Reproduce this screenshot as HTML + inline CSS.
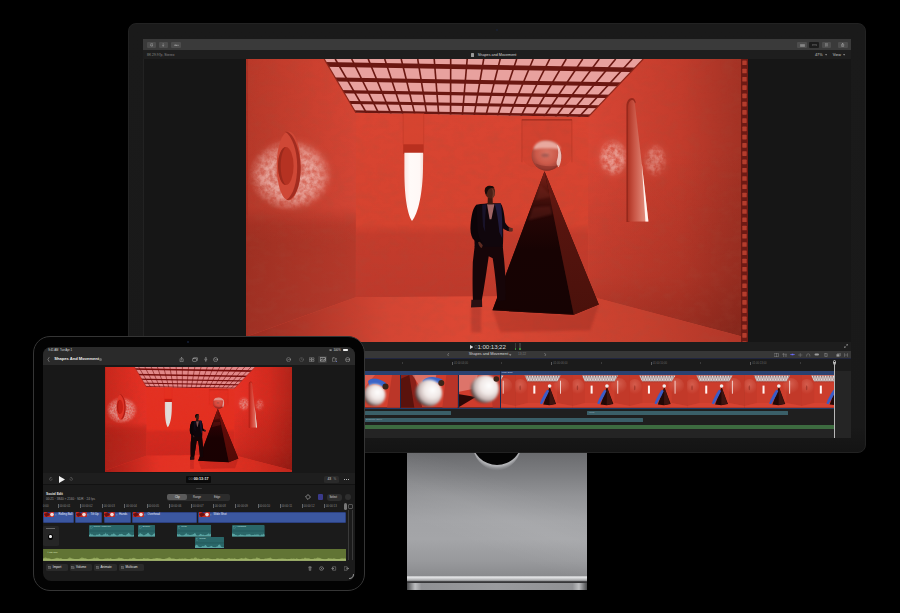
<!DOCTYPE html><html><head><meta charset="utf-8"><style>
html,body{margin:0;padding:0;background:#000;width:900px;height:613px;overflow:hidden;font-family:"Liberation Sans", sans-serif;}
div{box-sizing:border-box;}
svg{position:absolute;display:block;}
</style></head><body>
<svg width="0" height="0" style="position:absolute"><defs><symbol id="scene" viewBox="245.8 58.7 495.6 283" preserveAspectRatio="none">
<defs>
<linearGradient id="gLeft" x1="0" y1="0" x2="0" y2="1"><stop offset="0" stop-color="#d84533"/><stop offset="0.53" stop-color="#d24534"/><stop offset="0.6" stop-color="#bb3a2b"/><stop offset="0.66" stop-color="#b5392a"/><stop offset="1" stop-color="#b5392c"/></linearGradient><linearGradient id="gLeftShade" x1="0" y1="0" x2="1" y2="0"><stop offset="0" stop-color="#5a140a" stop-opacity="0.25"/><stop offset="1" stop-color="#5a140a" stop-opacity="0"/></linearGradient>
<linearGradient id="gBack" x1="0" y1="0" x2="0" y2="1"><stop offset="0" stop-color="#d94532"/><stop offset="0.6" stop-color="#d5432f"/><stop offset="0.66" stop-color="#c43c2c"/><stop offset="1" stop-color="#bd392b"/></linearGradient>
<linearGradient id="gRight" x1="0" y1="0" x2="1" y2="0"><stop offset="0" stop-color="#da4634"/><stop offset="0.1" stop-color="#d54433"/><stop offset="0.6" stop-color="#c23c2c"/><stop offset="0.93" stop-color="#a83426"/><stop offset="1" stop-color="#a43224"/></linearGradient><linearGradient id="gRightShade" x1="0" y1="0" x2="0" y2="1"><stop offset="0.33" stop-color="#4a0e08" stop-opacity="0"/><stop offset="0.58" stop-color="#4a0e08" stop-opacity="0.1"/><stop offset="0.78" stop-color="#4a0e08" stop-opacity="0.17"/><stop offset="0.87" stop-color="#4a0e08" stop-opacity="0.25"/><stop offset="1" stop-color="#4a0e08" stop-opacity="0.35"/></linearGradient>
<linearGradient id="gFloor" x1="0" y1="0" x2="1" y2="0"><stop offset="0" stop-color="#982b20"/><stop offset="0.12" stop-color="#b03628"/><stop offset="0.28" stop-color="#d34533"/><stop offset="0.45" stop-color="#dd4834"/><stop offset="0.8" stop-color="#c6402e"/><stop offset="1" stop-color="#b03628"/></linearGradient>
<radialGradient id="gSphere" cx="0.5" cy="0.42" r="0.58"><stop offset="0" stop-color="#d87464"/><stop offset="0.6" stop-color="#cc5a4a"/><stop offset="0.88" stop-color="#a8463a"/><stop offset="1" stop-color="#7a2c24"/></radialGradient>
<linearGradient id="gPyrL" x1="0" y1="0" x2="0" y2="1"><stop offset="0" stop-color="#7a2018"/><stop offset="0.12" stop-color="#5a160f"/><stop offset="0.3" stop-color="#260605"/><stop offset="0.55" stop-color="#170303"/><stop offset="1" stop-color="#160303"/></linearGradient><linearGradient id="gPyrR" x1="0" y1="0" x2="0" y2="1"><stop offset="0" stop-color="#6a1a12"/><stop offset="0.4" stop-color="#55140e"/><stop offset="1" stop-color="#4a110b"/></linearGradient>
<linearGradient id="gWin" x1="0" y1="0" x2="1" y2="0"><stop offset="0" stop-color="#fbe6e2"/><stop offset="0.3" stop-color="#fffaf8"/><stop offset="0.8" stop-color="#fff8f6"/><stop offset="1" stop-color="#f6dcd6"/></linearGradient>
<linearGradient id="gTall" x1="0" y1="0" x2="1" y2="0"><stop offset="0" stop-color="#b03424"/><stop offset="0.3" stop-color="#c85444"/><stop offset="0.7" stop-color="#dc7e6e"/><stop offset="1" stop-color="#e89888"/></linearGradient>
<filter id="blur2" x="-50%" y="-50%" width="200%" height="200%"><feGaussianBlur stdDeviation="4"/></filter>
<filter id="mottle" x="-20%" y="-20%" width="140%" height="140%"><feTurbulence type="fractalNoise" baseFrequency="0.2" numOctaves="4" seed="3" result="n"/><feColorMatrix in="n" type="matrix" values="0 0 0 0 0.98  0 0 0 0 0.8  0 0 0 0 0.77  0 0 0 2.2 -0.55" result="m"/><feComposite in="m" in2="SourceGraphic" operator="in" result="c"/><feGaussianBlur in="c" stdDeviation="0.4"/></filter>
<radialGradient id="gPatch"><stop offset="0" stop-color="#fff" stop-opacity="1"/><stop offset="0.6" stop-color="#fff" stop-opacity="0.9"/><stop offset="1" stop-color="#fff" stop-opacity="0"/></radialGradient>
<filter id="tex" x="0" y="0" width="100%" height="100%"><feTurbulence type="fractalNoise" baseFrequency="0.09 0.14" numOctaves="3" seed="11" result="n"/><feColorMatrix in="n" type="matrix" values="0 0 0 0 0.35  0 0 0 0 0.08  0 0 0 0 0.05  0 0 0 -1.6 0.95" result="d"/><feComposite in="d" in2="SourceGraphic" operator="in"/></filter>
<filter id="blur1" x="-50%" y="-50%" width="200%" height="200%"><feGaussianBlur stdDeviation="1.2"/></filter>
</defs>
<rect x="245.8" y="58.7" width="495.6" height="283" fill="#d44330"/>
<polygon points="355.7,112.5 588,116.6 588,295.5 355.7,297" fill="url(#gBack)"/>
<polygon points="245.8,58.7 324,58.7 355.7,112.5 355.7,297 245.8,336.5" fill="url(#gLeft)"/>
<polygon points="245.8,58.7 324,58.7 355.7,112.5 355.7,297 245.8,336.5" fill="url(#gLeftShade)"/>
<polygon points="643,58.7 741.4,58.7 741.4,336 588,295.5 588,116.6" fill="url(#gRight)"/>
<polygon points="643,58.7 741.4,58.7 741.4,336 588,295.5 588,116.6" fill="url(#gRightShade)"/>
<polygon points="245.8,341.7 245.8,336.5 355.7,297 588,295.5 741.4,336 741.4,341.7" fill="url(#gFloor)"/>
<rect x="245.8" y="58.7" width="2" height="283" fill="#a02c1f" opacity="0.6"/>
<rect x="245.8" y="58.7" width="495.6" height="283" fill="#000" filter="url(#tex)" opacity="0.22"/>
<clipPath id="ceilClip"><polygon points="324,58.7 643,58.7 588,116.6 355.7,112.5"/></clipPath>
<polygon points="324,58.7 643,58.7 588,116.6 355.7,112.5" fill="#e8a19e"/>
<g clip-path="url(#ceilClip)" stroke="#6a1711">
<line x1="300" y1="46.89" x2="680" y2="53.5" stroke-width="5.0"/>
<line x1="300" y1="63.69" x2="680" y2="70.3" stroke-width="4.6"/>
<line x1="300" y1="78.49" x2="680" y2="85.1" stroke-width="4.0"/>
<line x1="300" y1="90.69" x2="680" y2="97.3" stroke-width="3.4"/>
<line x1="300" y1="101.29" x2="680" y2="107.9" stroke-width="2.9"/>
<line x1="300" y1="110.59" x2="680" y2="117.2" stroke-width="3.0"/>
<line x1="302" y1="58.7" x2="347.77" y2="120" stroke-width="1.6"/>
<line x1="318.5" y1="58.7" x2="359.17" y2="120" stroke-width="1.6"/>
<line x1="335" y1="58.7" x2="370.57" y2="120" stroke-width="1.6"/>
<line x1="351.5" y1="58.7" x2="381.96" y2="120" stroke-width="1.6"/>
<line x1="368" y1="58.7" x2="393.36" y2="120" stroke-width="1.6"/>
<line x1="384.5" y1="58.7" x2="404.76" y2="120" stroke-width="1.6"/>
<line x1="401" y1="58.7" x2="416.15" y2="120" stroke-width="1.6"/>
<line x1="417.5" y1="58.7" x2="427.55" y2="120" stroke-width="1.6"/>
<line x1="434" y1="58.7" x2="438.95" y2="120" stroke-width="1.6"/>
<line x1="450.5" y1="58.7" x2="450.35" y2="120" stroke-width="1.6"/>
<line x1="467" y1="58.7" x2="461.74" y2="120" stroke-width="1.6"/>
<line x1="483.5" y1="58.7" x2="473.14" y2="120" stroke-width="1.6"/>
<line x1="500" y1="58.7" x2="484.54" y2="120" stroke-width="1.6"/>
<line x1="516.5" y1="58.7" x2="495.93" y2="120" stroke-width="1.6"/>
<line x1="533" y1="58.7" x2="507.33" y2="120" stroke-width="1.6"/>
<line x1="549.5" y1="58.7" x2="518.73" y2="120" stroke-width="1.6"/>
<line x1="566" y1="58.7" x2="530.12" y2="120" stroke-width="1.6"/>
<line x1="582.5" y1="58.7" x2="541.52" y2="120" stroke-width="1.6"/>
<line x1="599" y1="58.7" x2="552.92" y2="120" stroke-width="1.6"/>
<line x1="615.5" y1="58.7" x2="564.31" y2="120" stroke-width="1.6"/>
<line x1="632" y1="58.7" x2="575.71" y2="120" stroke-width="1.6"/>
<line x1="648.5" y1="58.7" x2="587.11" y2="120" stroke-width="1.6"/>
</g>
<polyline points="324,58.7 355.7,112.5" stroke="#8a2418" stroke-width="1.2" fill="none"/>
<polyline points="643,58.7 588,116.6" stroke="#8a2418" stroke-width="1.2" fill="none"/>
<rect x="403" y="113" width="20.5" height="31" fill="#d6452f" opacity="0.6"/><line x1="403" y1="113" x2="403" y2="144" stroke="#c13a28" stroke-width="0.6"/><line x1="423.5" y1="113" x2="423.5" y2="144" stroke="#c13a28" stroke-width="0.6"/>
<rect x="403" y="144" width="20.5" height="9.5" fill="#b8301f"/>
<path d="M404.2,152.5 L423,152.5 L422.8,168 C422.6,192 418,214 411.8,220.6 C406.5,213 404,192 404.2,168 Z" fill="url(#gWin)"/>
<path d="M521.7,119.4 L571.7,119.4 L571.7,152 C571.7,162 566,166 558,167 L535,167 C527,166 521.7,162 521.7,152 Z" fill="#7a1a10" opacity="0.06"/><path d="M521.7,162 L521.7,119.4 L571.7,119.4 L571.7,162" fill="none" stroke="#a83222" stroke-width="0.8" opacity="0.55"/><path d="M521.7,119.6 L571.7,119.6" stroke="#8a2418" stroke-width="1.2" opacity="0.6"/>
<ellipse cx="291" cy="174" rx="36" ry="31" fill="#e89488" opacity="0.5" filter="url(#blur2)"/><ellipse cx="290" cy="175" rx="42" ry="36" fill="url(#gPatch)" filter="url(#mottle)" opacity="0.5"/>
<ellipse cx="288.5" cy="165.6" rx="12" ry="34.5" fill="#cf4836"/>
<path d="M285,131.5 C293,130 300.5,150 300.5,168 C300.5,188 293,201.5 286.5,199.5 C293,195 297,182 297,166 C297,150 292,136 285,131.5 Z" fill="#9a281c" opacity="0.85"/>
<ellipse cx="285.6" cy="165.7" rx="7.8" ry="19" fill="#b53222"/><path d="M285.6,146.7 C281,147 277.8,156 277.8,165.7 C277.8,175 281,184.5 285.6,184.7 C282.5,182 280.5,174 280.5,165.7 C280.5,157 282.5,149.5 285.6,146.7 Z" fill="#8e2519" opacity="0.7"/>
<ellipse cx="613" cy="157.4" rx="13" ry="17" fill="#e88a7c" opacity="0.35" filter="url(#blur2)"/><ellipse cx="613" cy="157.4" rx="15" ry="19" fill="url(#gPatch)" filter="url(#mottle)" opacity="0.45"/>
<ellipse cx="655" cy="160" rx="11" ry="15" fill="#e88a7c" opacity="0.2" filter="url(#blur2)"/><ellipse cx="655" cy="160" rx="12" ry="17" fill="url(#gPatch)" filter="url(#mottle)" opacity="0.3"/>
<path d="M626.2,221.8 L626.2,106 C626.2,101 628.8,97.6 631.8,97.6 C633.8,97.6 635,99.5 635.6,102 L634.6,103.5 C633.5,101.5 632.5,100.4 631.5,100.4 C629.8,100.4 628.6,103 628.6,108 L629.2,221.8 Z" fill="#8e2419" opacity="0.85"/>
<path d="M627.8,221.2 L627.8,107 C627.8,102.5 630,99.6 632,99.6 C633.4,99.6 634.2,101 634.6,103 L648.2,221.2 Z" fill="url(#gTall)"/>
<path d="M641.6,163 L648.2,221.2 L645.2,221.2 Z" fill="#fff4f0"/>
<circle cx="546.5" cy="155.3" r="15.1" fill="url(#gSphere)"/>
<path d="M533,149 C535,142 540,140.4 546.5,140.4 C554,140.4 559,144 560.5,149 C553,147.5 540,147.5 533,149 Z" fill="#ecb2a8" opacity="0.9" filter="url(#blur1)"/>
<path d="M556.5,144 C562,149 562.5,160 558.5,167 C557,166 556,164 556.5,161 C558.5,155 558.5,150 556.5,144 Z" fill="#f4d0ca" opacity="0.85"/>
<ellipse cx="545" cy="155" rx="4" ry="1.8" fill="#7a4a48" opacity="0.55" filter="url(#blur1)"/>
<path d="M535,163 C539,168.5 544,170.3 548,170.3 C553,170 556.5,168 558.5,165 C552,166.5 541,166.5 535,163 Z" fill="#8a3028" opacity="0.6"/>
<polygon points="544.3,171 492.3,310 573.6,314.5 598.6,304.2" fill="#2a0806"/>
<polygon points="544.3,171 492.3,310 573.6,314.5" fill="url(#gPyrL)"/>
<polygon points="544.3,171 573.6,314.5 598.6,304.2" fill="url(#gPyrR)"/>
<path d="M540,185 L535,200 L552,196 Z M533,207 L528,220 L552,214 L550,206 Z" fill="#7a2a20" opacity="0.35" filter="url(#blur1)"/>
<polygon points="492.3,310 573.6,314.5 598.6,304.2 590,330 500,332" fill="#7a1e16" opacity="0.25" filter="url(#blur1)"/>
<rect x="471" y="307" width="10" height="25" fill="#6a2020" opacity="0.25" filter="url(#blur1)"/>
<g>
<path d="M474.5,245.5 L502.5,245.5 C503.5,256 505,268 505.2,280 L505.6,300 L497.2,301 C496.5,290 495,274 492.5,258 L488.5,256 C486.5,270 484,288 481.5,300.5 L472.8,301 C472.3,290 472.2,276 472.6,262 Z" fill="#160508"/>
<path d="M471.2,299.5 L481.8,299.5 L482,306.8 L470.8,307.2 Z" fill="#2a1012"/>
<path d="M476,204.5 C482,203.5 487,203 490.5,203 C494.5,203 498,203 500.5,203 C502.2,208 503,216 503,228 C503,236 503,242 502.6,246.5 L474.5,246.5 C474,238 473.8,226 474.2,216 C474.5,210 475,206.5 476,204.5 Z" fill="#10060c"/>
<path d="M476,204.8 C472.5,208 471.2,216 470.4,224 C469.8,230 470.6,235 472.6,238.5 L477.5,243 L480.5,244.5 L482,242.5 C479.2,239 477.6,234 477.2,228 C476.8,220 477.2,212 476,204.8 Z" fill="#0c0408"/>
<path d="M500.5,203.4 C503,206 504.2,214 504.8,222 C506.5,225.5 509,227.5 511.8,228.3 L512,231 C508,231.4 504.5,230 501.8,227 Z" fill="#0e060c"/>
<path d="M494.5,203.6 L500.5,203.2 C501.8,210 502.4,224 502,238 L499.2,232 C498.2,222 497,212 494.5,203.6 Z" fill="#24204a" opacity="0.8"/>
<path d="M482,204.5 L486.5,203.8 C485,212 484.5,222 485,232 L482.8,226 C482.3,218 482,210 482,204.5 Z" fill="#1e1a3c" opacity="0.6"/>
<path d="M486.8,204 L494.2,204 L491.2,219 L489.4,219 Z" fill="#a06464"/>
<path d="M487.6,197.2 L492.4,197.2 L492.6,204 L487.4,204 Z" fill="#3a1810"/>
<path d="M484.6,190.8 C484.6,187 486.8,185.6 489.8,185.6 C493.2,185.6 495,188 494.8,191.5 C494.7,194.5 494,198 490.8,198.2 C487.2,198.4 484.8,195 484.6,190.8 Z" fill="#4a2016"/>
<path d="M491.5,188 C493.5,189 494.6,191 494.5,193.5 C494.3,195.5 493.5,197.4 491.8,197.8 C492.8,195 493,191 491.5,188 Z" fill="#6a3628"/>
<path d="M484.6,190.5 C484.6,186.8 486.8,185.4 489.8,185.4 C492.2,185.4 493.6,186.2 494.2,187.6 C491,187.4 488.2,188.2 487.2,191.5 L486.2,194.2 C485,193.2 484.6,191.8 484.6,190.5 Z" fill="#180a08"/>
<path d="M477.8,242 C478.6,245.6 480,247.4 481.6,247.8 L482.6,245 L479.6,241.5 Z" fill="#5a2a20"/>
<path d="M508.6,227 L512.6,228 L512.4,231 L508.6,231 Z" fill="#5a2a20"/>
</g>
</symbol><symbol id="thumb" viewBox="0 0 57.3 32.7" preserveAspectRatio="none">
<defs><pattern id="chk" width="1.6" height="1.2" patternUnits="userSpaceOnUse"><rect width="1.6" height="1.2" fill="#e8e0e0"/><rect width="0.8" height="0.6" fill="#8a7070"/><rect x="0.8" y="0.6" width="0.8" height="0.6" fill="#a89090"/></pattern>
<radialGradient id="gArch" cx="0.5" cy="0.35" r="0.6"><stop offset="0" stop-color="#e07a6a" stop-opacity="0.55"/><stop offset="1" stop-color="#e07a6a" stop-opacity="0"/></radialGradient></defs>
<rect width="57.3" height="32.7" fill="#cc3d2c"/>
<polygon points="0,0 12.3,0 12.3,28 0,31" fill="#c53a2a"/>
<polygon points="41.7,0 57.3,0 57.3,31 41.7,28" fill="#c23929"/>
<polygon points="0,31 12.3,28 41.7,28 57.3,31 57.3,32.7 0,32.7" fill="#d64231"/>
<ellipse cx="5" cy="12" rx="7" ry="8" fill="url(#gArch)"/>
<ellipse cx="46" cy="11" rx="8" ry="8" fill="url(#gArch)"/>
<ellipse cx="4.9" cy="12.8" rx="0.7" ry="2.5" fill="#8a2a20" opacity="0.6"/>
<polygon points="9.3,0.6 45.3,0.6 41.7,6.6 12.3,6.6" fill="url(#chk)"/>
<rect x="12.3" y="6.6" width="29.4" height="0.6" fill="#9a3a30"/>
<rect x="18" y="10.6" width="2" height="8" fill="#fff4f2"/>
<rect x="44.5" y="5.7" width="0.9" height="13" fill="#f6dcd8"/>
<polygon points="34.2,11.9 27.8,29.4 34,30.2 40.6,29" fill="#220806"/>
<polygon points="34.2,11.9 34,30 40,28.8" fill="#3e1410"/>
<path d="M24.5,28.5 L26.2,24.2 L29,18.8 L31.6,14.8 L33.8,15.8 L31.5,20.8 L28.6,25.8 L26.6,29.2 Z" fill="#3a5cc8"/>
<circle cx="34.2" cy="11" r="1.8" fill="#f0ecec"/>
</symbol><symbol id="closeA" viewBox="0 0 35.3 32.7" preserveAspectRatio="none">
<defs><radialGradient id="gBall" cx="0.62" cy="0.4" r="0.75" fx="0.65" fy="0.38"><stop offset="0" stop-color="#ffffff"/><stop offset="0.4" stop-color="#f0e8e6"/><stop offset="0.65" stop-color="#c8b8b6"/><stop offset="0.85" stop-color="#4a3a38"/><stop offset="1" stop-color="#1a0a08"/></radialGradient>
<filter id="bb" x="-20%" y="-20%" width="140%" height="140%"><feGaussianBlur stdDeviation="0.9"/></filter></defs>
<rect width="35.3" height="32.7" fill="#d4402e"/>
<polygon points="27,0 35.3,0 35.3,32.7 22,32.7" fill="#bb3628"/>
<polygon points="0,0 10,0 0,12" fill="#e27a70" opacity="0.5"/>
<path d="M3,6 C7,2 14,3 21,8 L19.5,13 C14,9 8,8 4,11 Z" fill="#3a64c8"/>
<circle cx="9.5" cy="20" r="11" fill="url(#gBall)" filter="url(#bb)"/>
<circle cx="20.5" cy="11.5" r="3" fill="#3a2418"/>
</symbol>
<symbol id="closeB" viewBox="0 0 57.5 32.7" preserveAspectRatio="none">
<rect width="57.5" height="32.7" fill="#d03c2c"/>
<polygon points="0,0 14,0 22,32.7 0,32.7" fill="#8a2018"/>
<polygon points="0,4 9,0 14,32.7 0,32.7" fill="#5a120c"/>
<polygon points="12,0 36,0 34,10 20,12" fill="#e69a94" opacity="0.55"/>
<polygon points="46,0 57.5,0 57.5,32.7 42,32.7" fill="#b93428"/>
<path d="M22,6 C26,1 35,1 42,4.5 L40,9.5 C35,6 28,6 24,10 Z" fill="#3a64c8"/>
<circle cx="28.4" cy="18" r="13.5" fill="url(#gBall)" filter="url(#bb)"/>
<circle cx="41" cy="8" r="3" fill="#3a2418"/>
</symbol>
<symbol id="closeC" viewBox="0 0 42.5 32.7" preserveAspectRatio="none">
<rect width="42.5" height="32.7" fill="#cf3c2c"/>
<polygon points="0,0 20,0 15,14 0,17" fill="#e69a94" opacity="0.6"/>
<polygon points="0,19 18,22 0,32.7" fill="#2a0806"/>
<polygon points="31,0 42.5,0 42.5,32.7 35,32.7" fill="#b93428"/>
<circle cx="27" cy="14" r="14" fill="url(#gBall)" filter="url(#bb)"/>
<circle cx="38.5" cy="4" r="2.8" fill="#3a2418"/>
</symbol></defs></svg>

<div style="position:absolute;left:127.5px;top:22.8px;width:738.5px;height:430.4px;background:linear-gradient(180deg,#1a1a1a 0%,#191919 94%,#141414 100%);border:0.6px solid #222;border-radius:8px;"></div>
<div style="position:absolute;left:495.6px;top:28.9px;width:2.3px;height:2.3px;background:#1a2235;border-radius:50%;"></div>
<div style="position:absolute;left:143.3px;top:38.7px;width:707.4px;height:398.9px;background:#161616;"></div>
<div style="position:absolute;left:143.3px;top:38.7px;width:707.4px;height:11.4px;background:#3a3a3a;"></div>
<div style="position:absolute;left:147px;top:42.2px;width:9.3px;height:5.7px;background:#4d4d4d;border-radius:1px;"></div>
<div style="position:absolute;left:158.8px;top:42.2px;width:9.5px;height:5.7px;background:#4d4d4d;border-radius:1px;"></div>
<div style="position:absolute;left:170.8px;top:42.2px;width:10.4px;height:5.7px;background:#4d4d4d;border-radius:1px;"></div>
<div style="position:absolute;left:797px;top:42.2px;width:10px;height:5.7px;background:#4d4d4d;border-radius:1px;"></div>
<div style="position:absolute;left:809.3px;top:42.2px;width:10px;height:5.7px;background:#1c1c1c;border-radius:1px;"></div>
<div style="position:absolute;left:821.6px;top:42.2px;width:9.4px;height:5.7px;background:#4d4d4d;border-radius:1px;"></div>
<div style="position:absolute;left:838.2px;top:42.2px;width:9.6px;height:5.7px;background:#4d4d4d;border-radius:1px;"></div>
<svg style="left:149.8px;top:43.25px" width="3.6" height="3.6" viewBox="0 0 10 10" preserveAspectRatio="none"><g fill="none" stroke="#bbb" stroke-width="1.0" stroke-linecap="round" stroke-linejoin="round"><circle cx="5" cy="5" r="4"/><path d="M3,6.5 C4,4 6,4 7,6.5"/></g></svg>
<svg style="left:162.3px;top:43.25px" width="2.4" height="3.6" viewBox="0 0 10 10" preserveAspectRatio="none"><g fill="none" stroke="#bbb" stroke-width="1.1" stroke-linecap="round" stroke-linejoin="round"><path d="M5,1 L5,9 M2,6 L5,9 L8,6"/></g></svg>
<svg style="left:173.5px;top:43.75px" width="5" height="2.6" viewBox="0 0 10 10" preserveAspectRatio="none"><g fill="none" stroke="#bbb" stroke-width="1.2" stroke-linecap="round" stroke-linejoin="round"><circle cx="2.5" cy="5" r="2"/><path d="M4.5,5 L9.5,5"/></g></svg>
<svg style="left:799.5px;top:43.55px" width="5" height="3" viewBox="0 0 10 10" preserveAspectRatio="none"><g fill="none" stroke="#bbb" stroke-width="1.2" stroke-linecap="round" stroke-linejoin="round"><path d="M1,2 L9,2 M1,5 L9,5 M1,8 L9,8"/></g></svg>
<svg style="left:811.8px;top:43.85px" width="5" height="2.4" viewBox="0 0 10 10" preserveAspectRatio="none"><g fill="none" stroke="#888" stroke-width="1.0" stroke-linecap="round" stroke-linejoin="round"><rect x="1" y="2" width="8" height="6"/></g></svg>
<svg style="left:824.7px;top:43.25px" width="3.2" height="3.6" viewBox="0 0 10 10" preserveAspectRatio="none"><g fill="none" stroke="#bbb" stroke-width="1.2" stroke-linecap="round" stroke-linejoin="round"><path d="M2,1 L2,9 M5,2 L8,2 M5,5 L8,5 M5,8 L8,8"/></g></svg>
<svg style="left:841.3px;top:43.15px" width="3.4" height="3.8" viewBox="0 0 10 10" preserveAspectRatio="none"><g fill="none" stroke="#ccc" stroke-width="1.1" stroke-linecap="round" stroke-linejoin="round"><path d="M2,4 L2,9 L8,9 L8,4 M5,1 L5,6 M3.5,2.5 L5,1 L6.5,2.5"/></g></svg>
<div style="position:absolute;left:143.3px;top:50.1px;width:707.4px;height:8.6px;background:#1e1e1e;"></div>
<div style="position:absolute;left:147px;top:52.76px;font-size:3.4px;line-height:4.08px;color:#8a8a8a;font-weight:normal;white-space:nowrap;">8K 29.97p, Stereo</div>
<div style="position:absolute;left:470.8px;top:53.4px;width:3.4px;height:3.2px;background:#999;border-radius:0.5px;"></div>
<div style="position:absolute;left:477.8px;top:52.75px;font-size:3.75px;line-height:4.5px;color:#d4d4d4;font-weight:normal;white-space:nowrap;">Shapes and Movement</div>
<div style="position:absolute;left:815px;top:52.72px;font-size:3.8px;line-height:4.56px;color:#c8c8c8;font-weight:normal;white-space:nowrap;">47%</div>
<svg style="left:824.5px;top:54.1px" width="2.2" height="1.8" viewBox="0 0 10 10" preserveAspectRatio="none"><g fill="none" stroke="#bbb" stroke-width="0.5" stroke-linecap="round" stroke-linejoin="round"><path d="M1,2 L5,8 L9,2 Z" fill="#bbb"/></g></svg>
<div style="position:absolute;left:832.8px;top:52.72px;font-size:3.8px;line-height:4.56px;color:#c8c8c8;font-weight:normal;white-space:nowrap;">View</div>
<svg style="left:842.5px;top:54.1px" width="2.2" height="1.8" viewBox="0 0 10 10" preserveAspectRatio="none"><g fill="none" stroke="#bbb" stroke-width="0.5" stroke-linecap="round" stroke-linejoin="round"><path d="M1,2 L5,8 L9,2 Z" fill="#bbb"/></g></svg>
<div style="position:absolute;left:143.3px;top:58.7px;width:1px;height:283px;background:#222;"></div>
<svg style="left:245.8px;top:58.7px" width="495.6" height="283"><use href="#scene" width="495.6" height="283"/></svg>
<svg style="left:741.4px;top:58.7px" width="7" height="283" viewBox="0 0 7 283"><rect width="7" height="283" fill="#6e1a14"/><rect x="1.3" y="1.5" width="4.4" height="4.6" rx="0.6" fill="#b43c2c"/><rect x="1.3" y="9.76" width="4.4" height="4.6" rx="0.6" fill="#b43c2c"/><rect x="1.3" y="18.02" width="4.4" height="4.6" rx="0.6" fill="#b43c2c"/><rect x="1.3" y="26.28" width="4.4" height="4.6" rx="0.6" fill="#b43c2c"/><rect x="1.3" y="34.54" width="4.4" height="4.6" rx="0.6" fill="#b43c2c"/><rect x="1.3" y="42.8" width="4.4" height="4.6" rx="0.6" fill="#b43c2c"/><rect x="1.3" y="51.06" width="4.4" height="4.6" rx="0.6" fill="#b43c2c"/><rect x="1.3" y="59.32" width="4.4" height="4.6" rx="0.6" fill="#b43c2c"/><rect x="1.3" y="67.58" width="4.4" height="4.6" rx="0.6" fill="#b43c2c"/><rect x="1.3" y="75.84" width="4.4" height="4.6" rx="0.6" fill="#b43c2c"/><rect x="1.3" y="84.1" width="4.4" height="4.6" rx="0.6" fill="#b43c2c"/><rect x="1.3" y="92.36" width="4.4" height="4.6" rx="0.6" fill="#b43c2c"/><rect x="1.3" y="100.62" width="4.4" height="4.6" rx="0.6" fill="#b43c2c"/><rect x="1.3" y="108.88" width="4.4" height="4.6" rx="0.6" fill="#b43c2c"/><rect x="1.3" y="117.14" width="4.4" height="4.6" rx="0.6" fill="#b43c2c"/><rect x="1.3" y="125.4" width="4.4" height="4.6" rx="0.6" fill="#b43c2c"/><rect x="1.3" y="133.66" width="4.4" height="4.6" rx="0.6" fill="#b43c2c"/><rect x="1.3" y="141.92" width="4.4" height="4.6" rx="0.6" fill="#b43c2c"/><rect x="1.3" y="150.18" width="4.4" height="4.6" rx="0.6" fill="#b43c2c"/><rect x="1.3" y="158.44" width="4.4" height="4.6" rx="0.6" fill="#b43c2c"/><rect x="1.3" y="166.7" width="4.4" height="4.6" rx="0.6" fill="#b43c2c"/><rect x="1.3" y="174.96" width="4.4" height="4.6" rx="0.6" fill="#b43c2c"/><rect x="1.3" y="183.22" width="4.4" height="4.6" rx="0.6" fill="#b43c2c"/><rect x="1.3" y="191.48" width="4.4" height="4.6" rx="0.6" fill="#b43c2c"/><rect x="1.3" y="199.74" width="4.4" height="4.6" rx="0.6" fill="#b43c2c"/><rect x="1.3" y="208" width="4.4" height="4.6" rx="0.6" fill="#b43c2c"/><rect x="1.3" y="216.26" width="4.4" height="4.6" rx="0.6" fill="#b43c2c"/><rect x="1.3" y="224.52" width="4.4" height="4.6" rx="0.6" fill="#b43c2c"/><rect x="1.3" y="232.78" width="4.4" height="4.6" rx="0.6" fill="#b43c2c"/><rect x="1.3" y="241.04" width="4.4" height="4.6" rx="0.6" fill="#b43c2c"/><rect x="1.3" y="249.3" width="4.4" height="4.6" rx="0.6" fill="#b43c2c"/><rect x="1.3" y="257.56" width="4.4" height="4.6" rx="0.6" fill="#b43c2c"/><rect x="1.3" y="265.82" width="4.4" height="4.6" rx="0.6" fill="#b43c2c"/><rect x="1.3" y="274.08" width="4.4" height="4.6" rx="0.6" fill="#b43c2c"/><rect x="1.3" y="282.34" width="4.4" height="4.6" rx="0.6" fill="#b43c2c"/></svg>
<div style="position:absolute;left:143.3px;top:341.7px;width:707.4px;height:9.2px;background:#1d1d1d;"></div>
<svg style="left:469.8px;top:344.6px" width="3.4" height="4" viewBox="0 0 6 7"><polygon points="0,0 6,3.5 0,7" fill="#ddd"/></svg>
<div style="position:absolute;left:474.2px;top:342.6px;font-size:6.2px;line-height:8px;color:#d8d8d8;white-space:nowrap;letter-spacing:-0.1px"><span style="color:#555">0</span>1:00:13;22</div>
<div style="position:absolute;left:515.2px;top:342.8px;width:1.2px;height:6.8px;background:#3a3a3a;"></div>
<div style="position:absolute;left:519.4px;top:342.8px;width:1.2px;height:6.8px;background:#3a3a3a;"></div>
<div style="position:absolute;left:515.2px;top:348.2px;width:1.2px;height:1.4px;background:#3c8a3c;"></div>
<div style="position:absolute;left:519.4px;top:348.2px;width:1.2px;height:1.4px;background:#3c8a3c;"></div>
<svg style="left:844px;top:344.3px" width="4" height="4" viewBox="0 0 10 10" preserveAspectRatio="none"><g fill="none" stroke="#bbb" stroke-width="0.9" stroke-linecap="round" stroke-linejoin="round"><path d="M6,1 L9,1 L9,4 M4,9 L1,9 L1,6 M9,1 L6,4 M1,9 L4,6"/></g></svg>
<div style="position:absolute;left:143.3px;top:350.9px;width:707.4px;height:7.6px;background:#373737;"></div>
<div style="position:absolute;left:143.3px;top:358.1px;width:707.4px;height:0.8px;background:#20253f;"></div>
<svg style="left:447.3px;top:352.9px" width="2.4" height="3.6" viewBox="0 0 10 10" preserveAspectRatio="none"><g fill="none" stroke="#ccc" stroke-width="1.3" stroke-linecap="round" stroke-linejoin="round"><path d="M7,1 L3,5 L7,9"/></g></svg>
<div style="position:absolute;left:468.7px;top:352.49px;font-size:3.85px;line-height:4.62px;color:#d8d8d8;font-weight:normal;white-space:nowrap;">Shapes and Movement</div>
<svg style="left:509.3px;top:353.6px" width="2.4" height="2" viewBox="0 0 10 10" preserveAspectRatio="none"><g fill="none" stroke="#ccc" stroke-width="1.0" stroke-linecap="round" stroke-linejoin="round"><path d="M1,3 L5,7 L9,3" fill="#ccc"/></g></svg>
<div style="position:absolute;left:518px;top:352.88px;font-size:3.2px;line-height:3.84px;color:#777;font-weight:normal;white-space:nowrap;">13;22</div>
<svg style="left:544.3px;top:352.9px" width="2.4" height="3.6" viewBox="0 0 10 10" preserveAspectRatio="none"><g fill="none" stroke="#ccc" stroke-width="1.3" stroke-linecap="round" stroke-linejoin="round"><path d="M3,1 L7,5 L3,9"/></g></svg>
<svg style="left:773.5px;top:352.7px" width="5" height="4" viewBox="0 0 10 10" preserveAspectRatio="none"><g fill="none" stroke="#9a9a9a" stroke-width="0.9" stroke-linecap="round" stroke-linejoin="round"><rect x="1" y="1" width="8" height="8"/><path d="M5,1 L5,9"/></g></svg>
<svg style="left:782.2px;top:352.7px" width="5" height="4" viewBox="0 0 10 10" preserveAspectRatio="none"><g fill="none" stroke="#9a9a9a" stroke-width="0.9" stroke-linecap="round" stroke-linejoin="round"><path d="M1,3 L9,3 M3,1 L3,9 M6,5 L9,5 M6,8 L9,8"/></g></svg>
<svg style="left:790.2px;top:353.2px" width="5" height="3" viewBox="0 0 10 10" preserveAspectRatio="none"><g fill="none" stroke="#6a6aff" stroke-width="1.5" stroke-linecap="round" stroke-linejoin="round"><path d="M1,5 L9,5"/><rect x="3" y="2.5" width="4" height="5" rx="1" fill="#6a6aff" stroke="none"/></g></svg>
<svg style="left:798.45px;top:352.7px" width="4.5" height="4" viewBox="0 0 10 10" preserveAspectRatio="none"><g fill="none" stroke="#9a9a9a" stroke-width="0.8" stroke-linecap="round" stroke-linejoin="round"><path d="M5,1 L5,9 M1,5 L9,5"/></g></svg>
<svg style="left:806.45px;top:352.7px" width="4.5" height="4" viewBox="0 0 10 10" preserveAspectRatio="none"><g fill="none" stroke="#9a9a9a" stroke-width="1.0" stroke-linecap="round" stroke-linejoin="round"><path d="M1.5,8 L1.5,5 C1.5,1 8.5,1 8.5,5 L8.5,8"/></g></svg>
<svg style="left:813.55px;top:353.2px" width="5.5" height="3" viewBox="0 0 10 10" preserveAspectRatio="none"><g fill="none" stroke="#9a9a9a" stroke-width="0.9" stroke-linecap="round" stroke-linejoin="round"><rect x="1" y="2" width="8" height="6" rx="2" fill="#9a9a9a" stroke="none"/></g></svg>
<svg style="left:824.3px;top:352.7px" width="4" height="4" viewBox="0 0 10 10" preserveAspectRatio="none"><g fill="none" stroke="#9a9a9a" stroke-width="1.0" stroke-linecap="round" stroke-linejoin="round"><rect x="1.5" y="1" width="7" height="8" rx="1"/><path d="M5,1 L5,9"/></g></svg>
<svg style="left:835.5px;top:352.7px" width="5" height="4" viewBox="0 0 10 10" preserveAspectRatio="none"><g fill="none" stroke="#9a9a9a" stroke-width="0.9" stroke-linecap="round" stroke-linejoin="round"><rect x="1" y="3" width="6" height="6" fill="#9a9a9a" stroke="none"/><path d="M3,1 L9,1 L9,7"/></g></svg>
<svg style="left:844px;top:352.7px" width="4" height="4" viewBox="0 0 10 10" preserveAspectRatio="none"><g fill="none" stroke="#9a9a9a" stroke-width="0.9" stroke-linecap="round" stroke-linejoin="round"><path d="M1,1 L1,9 M9,1 L9,9 M1,5 L9,5"/></g></svg>
<div style="position:absolute;left:143.3px;top:358.5px;width:707.4px;height:12.1px;background:#1b1b1b;"></div>
<div style="position:absolute;left:402px;top:362.2px;width:0.5px;height:2px;background:#3a3a3a;"></div>
<div style="position:absolute;left:451.7px;top:362.2px;width:0.5px;height:2px;background:#3a3a3a;"></div>
<div style="position:absolute;left:501.4px;top:362.2px;width:0.5px;height:2px;background:#3a3a3a;"></div>
<div style="position:absolute;left:551.1px;top:362.2px;width:0.5px;height:2px;background:#3a3a3a;"></div>
<div style="position:absolute;left:600.8px;top:362.2px;width:0.5px;height:2px;background:#3a3a3a;"></div>
<div style="position:absolute;left:650.5px;top:362.2px;width:0.5px;height:2px;background:#3a3a3a;"></div>
<div style="position:absolute;left:700.2px;top:362.2px;width:0.5px;height:2px;background:#3a3a3a;"></div>
<div style="position:absolute;left:749.9px;top:362.2px;width:0.5px;height:2px;background:#3a3a3a;"></div>
<div style="position:absolute;left:799.6px;top:362.2px;width:0.5px;height:2px;background:#3a3a3a;"></div>
<div style="position:absolute;left:451.7px;top:361.8px;width:0.5px;height:2.8px;background:#5a5a5a;"></div>
<div style="position:absolute;left:453.9px;top:361.68px;font-size:2.7px;line-height:3.24px;color:#6a6a6a;font-weight:normal;white-space:nowrap;">01:00:04;00</div>
<div style="position:absolute;left:551px;top:361.8px;width:0.5px;height:2.8px;background:#5a5a5a;"></div>
<div style="position:absolute;left:553.2px;top:361.68px;font-size:2.7px;line-height:3.24px;color:#6a6a6a;font-weight:normal;white-space:nowrap;">01:00:06;00</div>
<div style="position:absolute;left:650.5px;top:361.8px;width:0.5px;height:2.8px;background:#5a5a5a;"></div>
<div style="position:absolute;left:652.7px;top:361.68px;font-size:2.7px;line-height:3.24px;color:#6a6a6a;font-weight:normal;white-space:nowrap;">01:00:10;00</div>
<div style="position:absolute;left:750px;top:361.8px;width:0.5px;height:2.8px;background:#5a5a5a;"></div>
<div style="position:absolute;left:752.2px;top:361.68px;font-size:2.7px;line-height:3.24px;color:#6a6a6a;font-weight:normal;white-space:nowrap;">01:00:13;00</div>
<div style="position:absolute;left:143.3px;top:370.6px;width:707.4px;height:67px;background:#1f1f1f;"></div>
<div style="position:absolute;left:143.3px;top:429.1px;width:707.4px;height:8.5px;background:#242424;"></div>
<div style="position:absolute;left:365px;top:371px;width:469px;height:4px;background:#2b4170;"></div>
<div style="position:absolute;left:365px;top:407.7px;width:469px;height:0.9px;background:#233a66;"></div>
<div style="position:absolute;left:501.5px;top:371.56px;font-size:2.4px;line-height:2.88px;color:#c8d0e8;font-weight:normal;white-space:nowrap;">Wide Shot</div>
<svg style="left:500.6px;top:375px" width="333.4" height="32.7"><use href="#thumb" x="-43.1" width="57.7" height="32.7"/><use href="#thumb" x="14.2" width="57.7" height="32.7"/><use href="#thumb" x="71.5" width="57.7" height="32.7"/><use href="#thumb" x="128.8" width="57.7" height="32.7"/><use href="#thumb" x="186.1" width="57.7" height="32.7"/><use href="#thumb" x="243.4" width="57.7" height="32.7"/><use href="#thumb" x="300.7" width="57.7" height="32.7"/></svg>
<svg style="left:365px;top:375px" width="135.6" height="32.7"><use href="#closeA" x="0" width="35.3" height="32.7"/><use href="#closeB" x="35.3" width="57.5" height="32.7"/><use href="#closeC" x="92.8" width="42.5" height="32.7"/></svg>
<div style="position:absolute;left:400px;top:375px;width:0.6px;height:32.7px;background:#1a2a50;"></div>
<div style="position:absolute;left:457.6px;top:375px;width:0.6px;height:32.7px;background:#1a2a50;"></div>
<div style="position:absolute;left:500px;top:371px;width:1px;height:37.5px;background:#1a2a50;"></div>
<div style="position:absolute;left:834px;top:370.6px;width:16.7px;height:67px;background:#252525;"></div>
<div style="position:absolute;left:365px;top:410.9px;width:85.8px;height:4.3px;background:#3a5f68;border-radius:0.5px;"></div>
<div style="position:absolute;left:587.4px;top:410.9px;width:200.6px;height:4.3px;background:#3a5f68;border-radius:0.5px;"></div>
<div style="position:absolute;left:589px;top:411.56px;font-size:2.4px;line-height:2.88px;color:#9ab;font-weight:normal;white-space:nowrap;">Wind</div>
<div style="position:absolute;left:365px;top:417.8px;width:278.4px;height:4.6px;background:#3a5f68;border-radius:0.5px;"></div>
<div style="position:absolute;left:366px;top:418.56px;font-size:2.4px;line-height:2.88px;color:#9ab;font-weight:normal;white-space:nowrap;">Dramatic Swell</div>
<div style="position:absolute;left:365px;top:424.9px;width:469px;height:4.2px;background:#3d6b40;"></div>
<div style="position:absolute;left:834px;top:362px;width:0.7px;height:75.6px;background:#b8b8b8;"></div>
<div style="position:absolute;left:832.6px;top:359.8px;width:3.6px;height:4.8px;border:0.6px solid #bbb;border-radius:1.5px;"></div>
<div style="position:absolute;left:407px;top:453px;width:180px;height:122.5px;background:linear-gradient(180deg,#6a6b6e 0%,#7a7b7e 15%,#929396 35%,#a2a3a6 55%,#a4a5a8 70%,#98999c 88%,#8a8b8e 100%);"></div>
<div style="position:absolute;left:407px;top:453px;width:180px;height:122.5px;background:linear-gradient(20deg,rgba(255,255,255,0) 30%,rgba(255,255,255,0.06) 50%,rgba(255,255,255,0) 70%);"></div>
<div style="position:absolute;left:407px;top:575.6px;width:180px;height:5.4px;background:linear-gradient(180deg,#b8b9bb 0%,#e2e3e5 25%,#c4c5c7 60%,#8e8f91 100%);"></div>
<div style="position:absolute;left:407px;top:581px;width:180px;height:2px;background:linear-gradient(180deg,#505052,#2e2e30);"></div>
<div style="position:absolute;left:407px;top:583px;width:180px;height:6.8px;background:linear-gradient(90deg,#4a4b4d 0%,#8a8b8d 2.5%,#bcbdbf 4.5%,#909194 8%,#9a9b9e 50%,#909194 92%,#bcbdbf 95.5%,#8a8b8d 97.5%,#4a4b4d 100%);"></div>
<svg style="left:467px;top:453px" width="60" height="20" viewBox="467 453 60 20"><defs><radialGradient id="gRim" cx="497" cy="441" r="30" gradientUnits="userSpaceOnUse"><stop offset="0.7" stop-color="#d4d5d8" stop-opacity="1"/><stop offset="0.85" stop-color="#b0b1b4" stop-opacity="0.9"/><stop offset="1" stop-color="#8a8b8e" stop-opacity="0"/></radialGradient></defs><ellipse cx="497" cy="441" rx="25" ry="29.5" fill="url(#gRim)"/><circle cx="497" cy="440" r="25" fill="#040404"/></svg>
<div style="position:absolute;left:32.5px;top:336.2px;width:332.5px;height:254.8px;background:#030303;border:0.8px solid #353535;border-radius:17px;"></div>
<div style="position:absolute;left:42.8px;top:346.5px;width:312.2px;height:234px;background:#1b1b1b;border-radius:8px;overflow:hidden;"></div>
<div style="position:absolute;left:42.8px;top:346.5px;width:312.2px;height:18.5px;background:#2a2a2a;border-radius:8px 8px 0 0;"></div>
<div style="position:absolute;left:48.2px;top:348.72px;font-size:2.8px;line-height:3.36px;color:#ddd;font-weight:normal;white-space:nowrap;">9:41 AM&nbsp;&nbsp;Tue Apr 1</div>
<svg style="left:328.8px;top:349px" width="3.2" height="2.4" viewBox="0 0 10 10" preserveAspectRatio="none"><g fill="none" stroke="#ddd" stroke-width="1.2" stroke-linecap="round" stroke-linejoin="round"><path d="M1,4 C4,1 6,1 9,4 M2.5,5.8 C4,4.3 6,4.3 7.5,5.8"/><circle cx="5" cy="8" r="1" fill="#ddd"/></g></svg>
<div style="position:absolute;left:333.4px;top:348.66px;font-size:2.9px;line-height:3.48px;color:#d8d8d8;font-weight:normal;white-space:nowrap;">100%</div>
<div style="position:absolute;left:342.8px;top:349px;width:5.6px;height:2.3px;background:#eee;border-radius:0.7px;"></div>
<div style="position:absolute;left:54.2px;top:356.94px;font-size:4.1px;line-height:4.92px;color:#ececec;font-weight:bold;white-space:nowrap;">Shapes And Movement</div>
<div style="position:absolute;left:99px;top:357.6px;width:3px;height:3px;background:#666;border-radius:50%;"></div>
<svg style="left:47px;top:356.8px" width="3" height="5" viewBox="0 0 10 10" preserveAspectRatio="none"><g fill="none" stroke="#ccc" stroke-width="1.1" stroke-linecap="round" stroke-linejoin="round"><path d="M7,1 L3,5 L7,9"/></g></svg>
<svg style="left:179px;top:356.7px" width="5.2" height="5.2" viewBox="0 0 10 10" preserveAspectRatio="none"><g fill="none" stroke="#bbb" stroke-width="0.9" stroke-linecap="round" stroke-linejoin="round"><path d="M2,4 L2,9 L8,9 L8,4"/><path d="M5,1 L5,6"/><path d="M3.3,2.6 L5,1 L6.7,2.6"/></g></svg>
<svg style="left:191.6px;top:356.7px" width="6" height="5.2" viewBox="0 0 10 10" preserveAspectRatio="none"><g fill="none" stroke="#bbb" stroke-width="0.9" stroke-linecap="round" stroke-linejoin="round"><rect x="1" y="3" width="6.5" height="5.5" rx="1"/><path d="M3,1.5 L9,1.5 L9,6.5"/></g></svg>
<svg style="left:204.2px;top:356.7px" width="3.6" height="5.2" viewBox="0 0 10 10" preserveAspectRatio="none"><g fill="none" stroke="#bbb" stroke-width="1.0" stroke-linecap="round" stroke-linejoin="round"><rect x="3.5" y="1" width="3" height="5" rx="1.5"/><path d="M2,5 C2,8 8,8 8,5"/><path d="M5,8 L5,9.5"/></g></svg>
<svg style="left:212.8px;top:356.7px" width="5.2" height="5.2" viewBox="0 0 10 10" preserveAspectRatio="none"><g fill="none" stroke="#bbb" stroke-width="0.9" stroke-linecap="round" stroke-linejoin="round"><circle cx="5" cy="5" r="4"/><path d="M3.2,4 L5,5.8 L6.8,4"/></g></svg>
<svg style="left:285.8px;top:356.7px" width="5.2" height="5.2" viewBox="0 0 10 10" preserveAspectRatio="none"><g fill="none" stroke="#999" stroke-width="0.9" stroke-linecap="round" stroke-linejoin="round"><circle cx="5" cy="5" r="4"/><path d="M2.5,6 L7.5,4"/></g></svg>
<svg style="left:298.8px;top:356.7px" width="5.2" height="5.2" viewBox="0 0 10 10" preserveAspectRatio="none"><g fill="none" stroke="#666" stroke-width="0.9" stroke-linecap="round" stroke-linejoin="round"><circle cx="5" cy="5" r="4"/><path d="M5,2.5 L5,5 L7,6"/></g></svg>
<svg style="left:309.2px;top:356.7px" width="5.6" height="5.2" viewBox="0 0 10 10" preserveAspectRatio="none"><g fill="none" stroke="#aaa" stroke-width="0.8" stroke-linecap="round" stroke-linejoin="round"><rect x="1" y="1.5" width="3.5" height="3"/><rect x="5.5" y="1.5" width="3.5" height="3"/><rect x="1" y="5.5" width="3.5" height="3"/><rect x="5.5" y="5.5" width="3.5" height="3"/></g></svg>
<div style="position:absolute;left:318.2px;top:356px;width:8.8px;height:6.6px;background:#3a3a3a;border-radius:1px;"></div>
<svg style="left:319.6px;top:357px" width="6" height="4.6" viewBox="0 0 10 10" preserveAspectRatio="none"><g fill="none" stroke="#ddd" stroke-width="0.9" stroke-linecap="round" stroke-linejoin="round"><rect x="1" y="1" width="8" height="8"/><path d="M1,7 L4,4.5 L6,6.5 L9,4"/></g></svg>
<svg style="left:331.6px;top:356.5px" width="5.6" height="5.6" viewBox="0 0 10 10" preserveAspectRatio="none"><g fill="none" stroke="#aaa" stroke-width="0.8" stroke-linecap="round" stroke-linejoin="round"><rect x="1" y="1.5" width="5" height="7" rx="1"/><path d="M7,3 L9,3 L9,9"/><circle cx="8" cy="8.5" r="1" fill="#7a8aff" stroke="none"/></g></svg>
<svg style="left:344.7px;top:356.6px" width="5.4" height="5.4" viewBox="0 0 10 10" preserveAspectRatio="none"><g fill="none" stroke="#bbb" stroke-width="0.9" stroke-linecap="round" stroke-linejoin="round"><circle cx="5" cy="5" r="4"/><path d="M2.8,5 L7.2,5"/></g></svg>
<div style="position:absolute;left:186.5px;top:340.8px;width:2.5px;height:2.4px;background:#16203a;border-radius:50%;"></div>
<div style="position:absolute;left:42.8px;top:365px;width:312.2px;height:107.7px;background:#181818;"></div>
<svg style="left:104.9px;top:366.7px;filter:saturate(1.4) brightness(0.88) hue-rotate(-3deg)" width="187.3" height="105.5"><use href="#scene" width="187.3" height="105.5"/></svg>
<svg style="left:104.9px;top:366.7px;filter:brightness(0.8)" width="187.3" height="105.5" viewBox="245.8 58.7 495.6 283" preserveAspectRatio="none"><g>
<path d="M474.5,245.5 L502.5,245.5 C503.5,256 505,268 505.2,280 L505.6,300 L497.2,301 C496.5,290 495,274 492.5,258 L488.5,256 C486.5,270 484,288 481.5,300.5 L472.8,301 C472.3,290 472.2,276 472.6,262 Z" fill="#160508"/>
<path d="M471.2,299.5 L481.8,299.5 L482,306.8 L470.8,307.2 Z" fill="#2a1012"/>
<path d="M476,204.5 C482,203.5 487,203 490.5,203 C494.5,203 498,203 500.5,203 C502.2,208 503,216 503,228 C503,236 503,242 502.6,246.5 L474.5,246.5 C474,238 473.8,226 474.2,216 C474.5,210 475,206.5 476,204.5 Z" fill="#10060c"/>
<path d="M476,204.8 C472.5,208 471.2,216 470.4,224 C469.8,230 470.6,235 472.6,238.5 L477.5,243 L480.5,244.5 L482,242.5 C479.2,239 477.6,234 477.2,228 C476.8,220 477.2,212 476,204.8 Z" fill="#0c0408"/>
<path d="M500.5,203.4 C503,206 504.2,214 504.8,222 C506.5,225.5 509,227.5 511.8,228.3 L512,231 C508,231.4 504.5,230 501.8,227 Z" fill="#0e060c"/>
<path d="M494.5,203.6 L500.5,203.2 C501.8,210 502.4,224 502,238 L499.2,232 C498.2,222 497,212 494.5,203.6 Z" fill="#24204a" opacity="0.8"/>
<path d="M482,204.5 L486.5,203.8 C485,212 484.5,222 485,232 L482.8,226 C482.3,218 482,210 482,204.5 Z" fill="#1e1a3c" opacity="0.6"/>
<path d="M486.8,204 L494.2,204 L491.2,219 L489.4,219 Z" fill="#a06464"/>
<path d="M487.6,197.2 L492.4,197.2 L492.6,204 L487.4,204 Z" fill="#3a1810"/>
<path d="M484.6,190.8 C484.6,187 486.8,185.6 489.8,185.6 C493.2,185.6 495,188 494.8,191.5 C494.7,194.5 494,198 490.8,198.2 C487.2,198.4 484.8,195 484.6,190.8 Z" fill="#4a2016"/>
<path d="M491.5,188 C493.5,189 494.6,191 494.5,193.5 C494.3,195.5 493.5,197.4 491.8,197.8 C492.8,195 493,191 491.5,188 Z" fill="#6a3628"/>
<path d="M484.6,190.5 C484.6,186.8 486.8,185.4 489.8,185.4 C492.2,185.4 493.6,186.2 494.2,187.6 C491,187.4 488.2,188.2 487.2,191.5 L486.2,194.2 C485,193.2 484.6,191.8 484.6,190.5 Z" fill="#180a08"/>
<path d="M477.8,242 C478.6,245.6 480,247.4 481.6,247.8 L482.6,245 L479.6,241.5 Z" fill="#5a2a20"/>
<path d="M508.6,227 L512.6,228 L512.4,231 L508.6,231 Z" fill="#5a2a20"/>
</g></svg>
<div style="position:absolute;left:42.8px;top:472.7px;width:312.2px;height:12.4px;background:#1e1e1e;border-bottom:0.8px solid #121212;"></div>
<svg style="left:49px;top:477.4px" width="4" height="4" viewBox="0 0 10 10" preserveAspectRatio="none"><g fill="none" stroke="#888" stroke-width="0.9" stroke-linecap="round" stroke-linejoin="round"><path d="M8,5 A3.5,3.5 0 1 1 5,1.5"/><path d="M4,0 L6,1.5 L4,3"/></g></svg>
<svg style="left:58.5px;top:476px" width="6" height="7" viewBox="0 0 6 7"><polygon points="0,0 6,3.5 0,7" fill="#f2f2f2"/></svg>
<svg style="left:69px;top:477.4px" width="4" height="4" viewBox="0 0 10 10" preserveAspectRatio="none"><g fill="none" stroke="#888" stroke-width="0.9" stroke-linecap="round" stroke-linejoin="round"><path d="M2,5 A3.5,3.5 0 1 0 5,1.5"/><path d="M6,0 L4,1.5 L6,3"/></g></svg>
<div style="position:absolute;left:186px;top:475.7px;width:24.8px;height:7.5px;background:#0a0a0a;border-radius:1px;"></div>
<div style="position:absolute;left:188.6px;top:477.2px;font-size:3.7px;line-height:4.6px;color:#e8e8e8;white-space:nowrap;font-weight:bold"><span style="color:#777;font-weight:normal">00:</span>00:13:17</div>
<div style="position:absolute;left:324.2px;top:475.7px;width:15.1px;height:7.5px;background:#2a2a2a;border-radius:1.5px;"></div>
<div style="position:absolute;left:327.5px;top:477.62px;font-size:3.3px;line-height:3.96px;color:#ddd;font-weight:normal;white-space:nowrap;">43</div>
<div style="position:absolute;left:333.5px;top:477.8px;font-size:3px;line-height:3.6px;color:#888;font-weight:normal;white-space:nowrap;">%</div>
<div style="position:absolute;left:343.7px;top:478.8px;width:1.2px;height:1.2px;background:#e8e8e8;border-radius:50%;"></div>
<div style="position:absolute;left:345.9px;top:478.8px;width:1.2px;height:1.2px;background:#e8e8e8;border-radius:50%;"></div>
<div style="position:absolute;left:348.1px;top:478.8px;width:1.2px;height:1.2px;background:#e8e8e8;border-radius:50%;"></div>
<div style="position:absolute;left:46px;top:493.22px;font-size:3.3px;line-height:3.96px;color:#e8e8e8;font-weight:bold;white-space:nowrap;">Social Edit</div>
<div style="position:absolute;left:46px;top:498.31px;font-size:3.15px;line-height:3.78px;color:#9a9a9a;font-weight:normal;white-space:nowrap;">00:21 · 3840 × 2160 · SDR · 24 fps</div>
<div style="position:absolute;left:195.8px;top:488.2px;width:6.4px;height:1.2px;background:#3a3a3a;border-radius:1px;"></div>
<div style="position:absolute;left:167px;top:493.6px;width:63px;height:7px;background:#2c2c2c;border-radius:2px;"></div>
<div style="position:absolute;left:167.4px;top:494px;width:20.1px;height:6.2px;background:#5a5a5a;border-radius:2px;"></div>
<div style="position:absolute;left:175px;top:495.58px;font-size:2.7px;line-height:3.24px;color:#eee;font-weight:normal;white-space:nowrap;">Clip</div>
<div style="position:absolute;left:193px;top:495.58px;font-size:2.7px;line-height:3.24px;color:#ccc;font-weight:normal;white-space:nowrap;">Range</div>
<div style="position:absolute;left:214px;top:495.58px;font-size:2.7px;line-height:3.24px;color:#ccc;font-weight:normal;white-space:nowrap;">Edge</div>
<div style="position:absolute;left:305px;top:494.2px;width:6px;height:6px;border:0.7px solid #aaa;transform:rotate(45deg) scale(0.7);"></div>
<div style="position:absolute;left:317.6px;top:494px;width:5.8px;height:6.4px;background:#3a3a8a;border-radius:1px;"></div>
<div style="position:absolute;left:327px;top:493.8px;width:15.2px;height:6.8px;background:#2e2e2e;border-radius:3px;"></div>
<div style="position:absolute;left:329.5px;top:495.58px;font-size:2.7px;line-height:3.24px;color:#ddd;font-weight:normal;white-space:nowrap;">Select</div>
<div style="position:absolute;left:344.8px;top:494px;width:6.2px;height:6.4px;background:#2e2e2e;border-radius:50%;"></div>
<div style="position:absolute;left:42.8px;top:502px;width:303.2px;height:8.5px;background:#1b1b1b;"></div>
<div style="position:absolute;left:43px;top:504.72px;font-size:2.8px;line-height:3.36px;color:#8a8a8a;font-weight:normal;white-space:nowrap;">0:00</div>
<div style="position:absolute;left:57.8px;top:504.4px;width:0.5px;height:3.8px;background:#666;"></div>
<div style="position:absolute;left:59.4px;top:504.72px;font-size:2.8px;line-height:3.36px;color:#8a8a8a;font-weight:normal;white-space:nowrap;">00:00:01</div>
<div style="position:absolute;left:80px;top:504.4px;width:0.5px;height:3.8px;background:#666;"></div>
<div style="position:absolute;left:81.6px;top:504.72px;font-size:2.8px;line-height:3.36px;color:#8a8a8a;font-weight:normal;white-space:nowrap;">00:00:02</div>
<div style="position:absolute;left:102.2px;top:504.4px;width:0.5px;height:3.8px;background:#666;"></div>
<div style="position:absolute;left:103.8px;top:504.72px;font-size:2.8px;line-height:3.36px;color:#8a8a8a;font-weight:normal;white-space:nowrap;">00:00:03</div>
<div style="position:absolute;left:124.4px;top:504.4px;width:0.5px;height:3.8px;background:#666;"></div>
<div style="position:absolute;left:126px;top:504.72px;font-size:2.8px;line-height:3.36px;color:#8a8a8a;font-weight:normal;white-space:nowrap;">00:00:04</div>
<div style="position:absolute;left:146.6px;top:504.4px;width:0.5px;height:3.8px;background:#666;"></div>
<div style="position:absolute;left:148.2px;top:504.72px;font-size:2.8px;line-height:3.36px;color:#8a8a8a;font-weight:normal;white-space:nowrap;">00:00:05</div>
<div style="position:absolute;left:168.8px;top:504.4px;width:0.5px;height:3.8px;background:#666;"></div>
<div style="position:absolute;left:170.4px;top:504.72px;font-size:2.8px;line-height:3.36px;color:#8a8a8a;font-weight:normal;white-space:nowrap;">00:00:06</div>
<div style="position:absolute;left:191px;top:504.4px;width:0.5px;height:3.8px;background:#666;"></div>
<div style="position:absolute;left:192.6px;top:504.72px;font-size:2.8px;line-height:3.36px;color:#8a8a8a;font-weight:normal;white-space:nowrap;">00:00:07</div>
<div style="position:absolute;left:213.2px;top:504.4px;width:0.5px;height:3.8px;background:#666;"></div>
<div style="position:absolute;left:214.8px;top:504.72px;font-size:2.8px;line-height:3.36px;color:#8a8a8a;font-weight:normal;white-space:nowrap;">00:00:08</div>
<div style="position:absolute;left:235.4px;top:504.4px;width:0.5px;height:3.8px;background:#666;"></div>
<div style="position:absolute;left:237px;top:504.72px;font-size:2.8px;line-height:3.36px;color:#8a8a8a;font-weight:normal;white-space:nowrap;">00:00:09</div>
<div style="position:absolute;left:257.6px;top:504.4px;width:0.5px;height:3.8px;background:#666;"></div>
<div style="position:absolute;left:259.2px;top:504.72px;font-size:2.8px;line-height:3.36px;color:#8a8a8a;font-weight:normal;white-space:nowrap;">00:00:10</div>
<div style="position:absolute;left:279.8px;top:504.4px;width:0.5px;height:3.8px;background:#666;"></div>
<div style="position:absolute;left:281.4px;top:504.72px;font-size:2.8px;line-height:3.36px;color:#8a8a8a;font-weight:normal;white-space:nowrap;">00:00:11</div>
<div style="position:absolute;left:302px;top:504.4px;width:0.5px;height:3.8px;background:#666;"></div>
<div style="position:absolute;left:303.6px;top:504.72px;font-size:2.8px;line-height:3.36px;color:#8a8a8a;font-weight:normal;white-space:nowrap;">00:00:12</div>
<div style="position:absolute;left:324.2px;top:504.4px;width:0.5px;height:3.8px;background:#666;"></div>
<div style="position:absolute;left:325.8px;top:504.72px;font-size:2.8px;line-height:3.36px;color:#8a8a8a;font-weight:normal;white-space:nowrap;">00:00:13</div>
<div style="position:absolute;left:343.5px;top:503.2px;width:3px;height:6.6px;background:#777;border-radius:1.5px;"></div>
<div style="position:absolute;left:42.8px;top:511.8px;width:31px;height:11.2px;background:#3b57a0;border-radius:1px;border:0.5px solid #2c4080;"></div>
<svg style="left:43.6px;top:512.4px" width="10.8" height="5" viewBox="0 0 10.8 5"><rect width="10.8" height="5" fill="#c82a20"/><path d="M0,2 L4,0 L6,3 L2,5 Z" fill="#6a1010"/><circle cx="8" cy="2.6" r="1.8" fill="#eedddd"/><path d="M3,0 L7,0 L5,1.5 Z" fill="#2a3a8a"/></svg>
<svg style="left:54.8px;top:513.5px" width="2.4" height="2.4" viewBox="0 0 10 10" preserveAspectRatio="none"><g fill="none" stroke="#9ab" stroke-width="0.9" stroke-linecap="round" stroke-linejoin="round"><rect x="1" y="1" width="8" height="8" rx="1"/></g></svg>
<div style="position:absolute;left:58.4px;top:513.12px;font-size:2.8px;line-height:3.36px;color:#e8ecf8;font-weight:normal;white-space:nowrap;">Rolling Ball</div>
<div style="position:absolute;left:75px;top:511.8px;width:27.2px;height:11.2px;background:#3b57a0;border-radius:1px;border:0.5px solid #2c4080;"></div>
<svg style="left:75.8px;top:512.4px" width="10.8" height="5" viewBox="0 0 10.8 5"><rect width="10.8" height="5" fill="#c82a20"/><path d="M0,2 L4,0 L6,3 L2,5 Z" fill="#6a1010"/><circle cx="8" cy="2.6" r="1.8" fill="#eedddd"/><path d="M3,0 L7,0 L5,1.5 Z" fill="#2a3a8a"/></svg>
<svg style="left:87px;top:513.5px" width="2.4" height="2.4" viewBox="0 0 10 10" preserveAspectRatio="none"><g fill="none" stroke="#9ab" stroke-width="0.9" stroke-linecap="round" stroke-linejoin="round"><rect x="1" y="1" width="8" height="8" rx="1"/></g></svg>
<div style="position:absolute;left:90.6px;top:513.12px;font-size:2.8px;line-height:3.36px;color:#e8ecf8;font-weight:normal;white-space:nowrap;">Tilt Up</div>
<div style="position:absolute;left:103.5px;top:511.8px;width:27.2px;height:11.2px;background:#3b57a0;border-radius:1px;border:0.5px solid #2c4080;"></div>
<svg style="left:104.3px;top:512.4px" width="10.8" height="5" viewBox="0 0 10.8 5"><rect width="10.8" height="5" fill="#c82a20"/><path d="M0,2 L4,0 L6,3 L2,5 Z" fill="#6a1010"/><circle cx="8" cy="2.6" r="1.8" fill="#eedddd"/><path d="M3,0 L7,0 L5,1.5 Z" fill="#2a3a8a"/></svg>
<svg style="left:115.5px;top:513.5px" width="2.4" height="2.4" viewBox="0 0 10 10" preserveAspectRatio="none"><g fill="none" stroke="#9ab" stroke-width="0.9" stroke-linecap="round" stroke-linejoin="round"><rect x="1" y="1" width="8" height="8" rx="1"/></g></svg>
<div style="position:absolute;left:119.1px;top:513.12px;font-size:2.8px;line-height:3.36px;color:#e8ecf8;font-weight:normal;white-space:nowrap;">Hands</div>
<div style="position:absolute;left:132px;top:511.8px;width:65.3px;height:11.2px;background:#3b57a0;border-radius:1px;border:0.5px solid #2c4080;"></div>
<svg style="left:132.8px;top:512.4px" width="10.8" height="5" viewBox="0 0 10.8 5"><rect width="10.8" height="5" fill="#c82a20"/><path d="M0,2 L4,0 L6,3 L2,5 Z" fill="#6a1010"/><circle cx="8" cy="2.6" r="1.8" fill="#eedddd"/><path d="M3,0 L7,0 L5,1.5 Z" fill="#2a3a8a"/></svg>
<svg style="left:144px;top:513.5px" width="2.4" height="2.4" viewBox="0 0 10 10" preserveAspectRatio="none"><g fill="none" stroke="#9ab" stroke-width="0.9" stroke-linecap="round" stroke-linejoin="round"><rect x="1" y="1" width="8" height="8" rx="1"/></g></svg>
<div style="position:absolute;left:147.6px;top:513.12px;font-size:2.8px;line-height:3.36px;color:#e8ecf8;font-weight:normal;white-space:nowrap;">Overhead</div>
<div style="position:absolute;left:198px;top:511.8px;width:148px;height:11.2px;background:#3b57a0;border-radius:1px;border:0.5px solid #2c4080;"></div>
<svg style="left:198.8px;top:512.4px" width="10.8" height="5" viewBox="0 0 10.8 5"><rect width="10.8" height="5" fill="#c82a20"/><path d="M0,2 L4,0 L6,3 L2,5 Z" fill="#6a1010"/><circle cx="8" cy="2.6" r="1.8" fill="#eedddd"/><path d="M3,0 L7,0 L5,1.5 Z" fill="#2a3a8a"/></svg>
<svg style="left:210px;top:513.5px" width="2.4" height="2.4" viewBox="0 0 10 10" preserveAspectRatio="none"><g fill="none" stroke="#9ab" stroke-width="0.9" stroke-linecap="round" stroke-linejoin="round"><rect x="1" y="1" width="8" height="8" rx="1"/></g></svg>
<div style="position:absolute;left:213.6px;top:513.12px;font-size:2.8px;line-height:3.36px;color:#e8ecf8;font-weight:normal;white-space:nowrap;">Wide Shot</div>
<svg style="left:88.9px;top:525px" width="45.3" height="11.5" viewBox="0 0 45.3 11.5"><rect width="45.3" height="11.5" rx="1" fill="#2a6668"/><rect y="5.75" width="45.3" height="0.5" fill="#1e4e50"/><polygon points="0,11.5 0,9.75 0.84,9.7 1.68,8.35 2.52,9.78 3.36,9.17 4.19,9.93 5.03,10.46 5.87,10.28 6.71,10.39 7.55,9.58 8.39,9.87 9.23,9.69 10.07,8.99 10.91,8.67 11.74,10.2 12.58,10.37 13.42,10.22 14.26,9.62 15.1,9.36 15.94,9.18 16.78,7.57 17.62,9.84 18.46,8.64 19.29,10.03 20.13,10.42 20.97,10.47 21.81,10.15 22.65,8.99 23.49,9.62 24.33,8.51 25.17,8.52 26.01,9.49 26.84,9.77 27.68,10.47 28.52,10.5 29.36,10.23 30.2,9.17 31.04,9.1 31.88,9.15 32.72,8.65 33.56,9.36 34.39,10.04 35.23,10.05 36.07,10.17 36.91,10.19 37.75,9.32 38.59,8.88 39.43,7.8 40.27,8.34 41.11,9.65 41.94,9.35 42.78,10.44 43.62,10.31 44.46,9.72 45.3,9.95 45.3,11.5" fill="#58a3a2"/></svg>
<svg style="left:90.1px;top:526.3px" width="2.6" height="2.6" viewBox="0 0 10 10" preserveAspectRatio="none"><g fill="none" stroke="#8cc" stroke-width="0.9" stroke-linecap="round" stroke-linejoin="round"><rect x="1" y="1" width="8" height="8" rx="2"/></g></svg>
<div style="position:absolute;left:93.5px;top:526.36px;font-size:2.4px;line-height:2.88px;color:#bfe0e0;font-weight:normal;white-space:nowrap;">Room Ambience</div>
<svg style="left:137.8px;top:525px" width="17.4" height="11.5" viewBox="0 0 17.4 11.5"><rect width="17.4" height="11.5" rx="1" fill="#2a6668"/><rect y="5.75" width="17.4" height="0.5" fill="#1e4e50"/><polygon points="0,11.5 0,9.52 0.87,9.93 1.74,8.31 2.61,8.21 3.48,9.1 4.35,9.37 5.22,10.31 6.09,10.19 6.96,9.93 7.83,9.37 8.7,9.07 9.57,7.9 10.44,7.81 11.31,9.29 12.18,9.61 13.05,10.47 13.92,10.18 14.79,9.87 15.66,8.75 16.53,8.29 17.4,9.22 17.4,11.5" fill="#58a3a2"/></svg>
<svg style="left:139px;top:526.3px" width="2.6" height="2.6" viewBox="0 0 10 10" preserveAspectRatio="none"><g fill="none" stroke="#8cc" stroke-width="0.9" stroke-linecap="round" stroke-linejoin="round"><rect x="1" y="1" width="8" height="8" rx="2"/></g></svg>
<div style="position:absolute;left:142.4px;top:526.36px;font-size:2.4px;line-height:2.88px;color:#bfe0e0;font-weight:normal;white-space:nowrap;">Drama...</div>
<svg style="left:176.5px;top:525px" width="34.5" height="11.5" viewBox="0 0 34.5 11.5"><rect width="34.5" height="11.5" rx="1" fill="#2a6668"/><rect y="5.75" width="34.5" height="0.5" fill="#1e4e50"/><polygon points="0,11.5 0,9.66 0.84,8.64 1.68,9.85 2.52,8.9 3.37,9.82 4.21,10.2 5.05,10.46 5.89,10.15 6.73,10.31 7.57,9.85 8.41,9.2 9.26,7.82 10.1,9.76 10.94,9.33 11.78,9.74 12.62,9.98 13.46,10.12 14.3,9.69 15.15,9.8 15.99,9.14 16.83,9.05 17.67,7.96 18.51,8.47 19.35,10.18 20.2,10.4 21.04,10.42 21.88,10.21 22.72,9.48 23.56,8.77 24.4,9.27 25.24,9.94 26.09,9.41 26.93,9.96 27.77,10.18 28.61,10.05 29.45,9.81 30.29,9.42 31.13,8.7 31.98,8.28 32.82,9.83 33.66,8.6 34.5,9.54 34.5,11.5" fill="#58a3a2"/></svg>
<svg style="left:177.7px;top:526.3px" width="2.6" height="2.6" viewBox="0 0 10 10" preserveAspectRatio="none"><g fill="none" stroke="#8cc" stroke-width="0.9" stroke-linecap="round" stroke-linejoin="round"><rect x="1" y="1" width="8" height="8" rx="2"/></g></svg>
<div style="position:absolute;left:181.1px;top:526.36px;font-size:2.4px;line-height:2.88px;color:#bfe0e0;font-weight:normal;white-space:nowrap;">Wind</div>
<svg style="left:232px;top:525px" width="32.6" height="11.5" viewBox="0 0 32.6 11.5"><rect width="32.6" height="11.5" rx="1" fill="#2a6668"/><rect y="5.75" width="32.6" height="0.5" fill="#1e4e50"/><polygon points="0,11.5 0,8.96 0.84,8.37 1.67,8.97 2.51,9.04 3.34,9.93 4.18,9.63 5.02,10.46 5.85,10.5 6.69,10.25 7.52,9.98 8.36,9.31 9.19,9.78 10.03,9.95 10.87,9.85 11.7,10.23 12.54,10.28 13.37,10.52 14.21,9.68 15.05,9.31 15.88,9.7 16.72,9.3 17.55,9.17 18.39,9.49 19.23,10.21 20.06,10 20.9,10.03 21.73,10.01 22.57,9.48 23.41,9.82 24.24,9.66 25.08,9.18 25.91,9.67 26.75,9.47 27.58,10.41 28.42,10.52 29.26,9.58 30.09,9.4 30.93,9.69 31.76,8.6 32.6,9.89 32.6,11.5" fill="#58a3a2"/></svg>
<svg style="left:233.2px;top:526.3px" width="2.6" height="2.6" viewBox="0 0 10 10" preserveAspectRatio="none"><g fill="none" stroke="#8cc" stroke-width="0.9" stroke-linecap="round" stroke-linejoin="round"><rect x="1" y="1" width="8" height="8" rx="2"/></g></svg>
<div style="position:absolute;left:236.6px;top:526.36px;font-size:2.4px;line-height:2.88px;color:#bfe0e0;font-weight:normal;white-space:nowrap;">Highlight</div>
<svg style="left:194.7px;top:537px" width="29.3" height="11.4" viewBox="0 0 29.3 11.4"><rect width="29.3" height="11.4" rx="1" fill="#2a6668"/><rect y="5.7" width="29.3" height="0.5" fill="#1e4e50"/><polygon points="0,11.4 0,9.36 0.84,7.9 1.67,7.74 2.51,8.26 3.35,9.55 4.19,9.83 5.02,10.3 5.86,10.05 6.7,9.88 7.53,8.98 8.37,9.23 9.21,9.27 10.05,8.01 10.88,8.3 11.72,9.31 12.56,9.92 13.39,10.02 14.23,9.69 15.07,9.78 15.91,8.83 16.74,8.95 17.58,9.78 18.42,9.97 19.25,9.94 20.09,10.25 20.93,10.08 21.77,9.49 22.6,9.44 23.44,7.94 24.28,7.44 25.11,7.71 25.95,9.4 26.79,10.01 27.63,10.27 28.46,10.33 29.3,10.13 29.3,11.4" fill="#58a3a2"/></svg>
<svg style="left:195.9px;top:538.3px" width="2.6" height="2.6" viewBox="0 0 10 10" preserveAspectRatio="none"><g fill="none" stroke="#8cc" stroke-width="0.9" stroke-linecap="round" stroke-linejoin="round"><rect x="1" y="1" width="8" height="8" rx="2"/></g></svg>
<div style="position:absolute;left:199.3px;top:538.36px;font-size:2.4px;line-height:2.88px;color:#bfe0e0;font-weight:normal;white-space:nowrap;">Crash</div>
<div style="position:absolute;left:42.7px;top:526.2px;width:16px;height:19.6px;background:#262626;border-radius:1.5px;"></div>
<div style="position:absolute;left:46px;top:527.8px;width:9px;height:0.6px;background:#666;"></div>
<div style="position:absolute;left:48px;top:534px;width:5.2px;height:6px;background:#050505;border-radius:50%;"></div>
<div style="position:absolute;left:49.3px;top:535.3px;width:2.3px;height:3.2px;background:#eee;border-radius:50%;"></div>
<svg style="left:42.8px;top:549.3px" width="303.4" height="11.6" viewBox="0 0 303.4 11.6"><rect width="303.4" height="11.6" fill="#617434"/><polygon points="0,11.6 0,9.45 1.38,8.65 2.76,8.47 4.14,9.13 5.52,9.21 6.9,9.54 8.27,10.23 9.65,10.06 11.03,9.69 12.41,9.28 13.79,8.86 15.17,9.07 16.55,9.6 17.93,9.05 19.31,9.9 20.69,9.94 22.07,9.95 23.44,9.98 24.82,9.66 26.2,8.57 27.58,8.66 28.96,9.62 30.34,9.85 31.72,10.04 33.1,9.9 34.48,10.01 35.86,10.12 37.24,9.21 38.61,8.51 39.99,8.77 41.37,9.35 42.75,9.36 44.13,10.06 45.51,10.26 46.89,9.95 48.27,9.81 49.65,9.51 51.03,8.57 52.41,9.14 53.78,8.55 55.16,9.04 56.54,10.01 57.92,10.17 59.3,10.18 60.68,10.05 62.06,9.44 63.44,9.54 64.82,9.16 66.2,9.69 67.58,8.96 68.95,9.91 70.33,10.09 71.71,10.08 73.09,9.64 74.47,9.6 75.85,8.57 77.23,9.02 78.61,9.08 79.99,9.42 81.37,10.15 82.75,10.1 84.12,10.22 85.5,10.19 86.88,9.19 88.26,9.66 89.64,9.07 91.02,8.79 92.4,9.39 93.78,9.95 95.16,10.08 96.54,10.08 97.92,9.69 99.29,9.93 100.67,9.08 102.05,9.44 103.43,9.48 104.81,9.16 106.19,9.83 107.57,10.06 108.95,10 110.33,9.6 111.71,9.55 113.09,8.99 114.46,9.02 115.84,9.13 117.22,9.26 118.6,9.88 119.98,10.08 121.36,10.1 122.74,9.56 124.12,9.26 125.5,8.59 126.88,8.3 128.26,9.51 129.63,9.41 131.01,9.56 132.39,9.97 133.77,10.23 135.15,10.1 136.53,9.54 137.91,9.79 139.29,9.45 140.67,9.79 142.05,9.3 143.43,9.68 144.8,9.95 146.18,10.22 147.56,9.69 148.94,9.28 150.32,9.68 151.7,8.39 153.08,8.47 154.46,9.8 155.84,9.58 157.22,10.14 158.6,10.09 159.97,9.49 161.35,9.08 162.73,9.65 164.11,9.14 165.49,9.15 166.87,9.68 168.25,10.07 169.63,10.17 171.01,10 172.39,10.16 173.77,9.38 175.14,9.22 176.52,9.82 177.9,9.43 179.28,9.39 180.66,9.88 182.04,10.26 183.42,9.89 184.8,9.61 186.18,8.89 187.56,9.73 188.94,9.41 190.31,9.86 191.69,9.23 193.07,10.03 194.45,10.24 195.83,10.1 197.21,9.51 198.59,9.06 199.97,9.49 201.35,9.61 202.73,8.58 204.11,9.46 205.48,9.78 206.86,10.25 208.24,10.24 209.62,9.66 211,9.51 212.38,9.78 213.76,8.31 215.14,9 216.52,9.23 217.9,10.15 219.28,9.99 220.65,10.24 222.03,9.52 223.41,9.47 224.79,9.36 226.17,8.94 227.55,8.59 228.93,9.79 230.31,10.13 231.69,10.1 233.07,10.17 234.45,10.07 235.82,9.81 237.2,9.8 238.58,9.52 239.96,9.48 241.34,9.76 242.72,9.77 244.1,10.19 245.48,10.06 246.86,10.01 248.24,9.58 249.62,9.85 250.99,9.44 252.37,9.91 253.75,9.34 255.13,9.9 256.51,10.22 257.89,10.06 259.27,9.43 260.65,9.86 262.03,8.6 263.41,9.15 264.79,9.23 266.16,9.25 267.54,9.99 268.92,10.12 270.3,9.97 271.68,9.38 273.06,9.57 274.44,8.57 275.82,8.7 277.2,9.04 278.58,9.68 279.96,10.03 281.33,10.27 282.71,10.2 284.09,10.08 285.47,9.07 286.85,9.47 288.23,9.59 289.61,9.82 290.99,9.27 292.37,9.75 293.75,10.06 295.13,10.13 296.5,9.94 297.88,9.62 299.26,9.15 300.64,9.6 302.02,9.32 303.4,9.83 303.4,11.6" fill="#8fa458"/><rect y="10.6" width="303.4" height="1" fill="#b8c880"/></svg>
<div style="position:absolute;left:47px;top:551.22px;font-size:2.3px;line-height:2.76px;color:#dde8c0;font-weight:normal;white-space:nowrap;">♫ 8th Trav</div>
<div style="position:absolute;left:348.2px;top:510px;width:1px;height:50px;background:#3a3a3a;"></div>
<div style="position:absolute;left:351.6px;top:510px;width:1px;height:50px;background:#3a3a3a;"></div>
<div style="position:absolute;left:348px;top:503.6px;width:5px;height:5px;border:0.6px solid #555;border-radius:1px;"></div>
<div style="position:absolute;left:46.2px;top:564.4px;width:21.4px;height:6.8px;background:#2a2a2a;border-radius:1.5px;"></div>
<div style="position:absolute;left:52.8px;top:566.3px;font-size:3.0px;line-height:3.6px;color:#e4e4e4;font-weight:normal;white-space:nowrap;">Import</div>
<svg style="left:48.1px;top:566.1px" width="3.4" height="3.4" viewBox="0 0 10 10" preserveAspectRatio="none"><g fill="none" stroke="#bbb" stroke-width="0.9" stroke-linecap="round" stroke-linejoin="round"><rect x="1" y="1" width="8" height="8" rx="1.5"/><path d="M3.5,3 L3.5,7 M6.5,3 L6.5,7"/></g></svg>
<div style="position:absolute;left:69.5px;top:564.4px;width:22.1px;height:6.8px;background:#2a2a2a;border-radius:1.5px;"></div>
<div style="position:absolute;left:76.1px;top:566.3px;font-size:3.0px;line-height:3.6px;color:#e4e4e4;font-weight:normal;white-space:nowrap;">Volume</div>
<svg style="left:71.4px;top:566.1px" width="3.4" height="3.4" viewBox="0 0 10 10" preserveAspectRatio="none"><g fill="none" stroke="#bbb" stroke-width="0.9" stroke-linecap="round" stroke-linejoin="round"><rect x="1" y="1" width="8" height="8" rx="1.5"/><path d="M3.5,3 L3.5,7 M6.5,3 L6.5,7"/></g></svg>
<div style="position:absolute;left:94px;top:564.4px;width:22.8px;height:6.8px;background:#2a2a2a;border-radius:1.5px;"></div>
<div style="position:absolute;left:100.6px;top:566.3px;font-size:3.0px;line-height:3.6px;color:#e4e4e4;font-weight:normal;white-space:nowrap;">Animate</div>
<svg style="left:95.9px;top:566.1px" width="3.4" height="3.4" viewBox="0 0 10 10" preserveAspectRatio="none"><g fill="none" stroke="#bbb" stroke-width="0.9" stroke-linecap="round" stroke-linejoin="round"><rect x="1" y="1" width="8" height="8" rx="1.5"/><path d="M3.5,3 L3.5,7 M6.5,3 L6.5,7"/></g></svg>
<div style="position:absolute;left:119px;top:564.4px;width:24.5px;height:6.8px;background:#2a2a2a;border-radius:1.5px;"></div>
<div style="position:absolute;left:125.6px;top:566.3px;font-size:3.0px;line-height:3.6px;color:#e4e4e4;font-weight:normal;white-space:nowrap;">Multicam</div>
<svg style="left:120.9px;top:566.1px" width="3.4" height="3.4" viewBox="0 0 10 10" preserveAspectRatio="none"><g fill="none" stroke="#bbb" stroke-width="0.9" stroke-linecap="round" stroke-linejoin="round"><rect x="1" y="1" width="8" height="8" rx="1.5"/><path d="M3.5,3 L3.5,7 M6.5,3 L6.5,7"/></g></svg>
<svg style="left:308px;top:565.5px" width="4" height="5" viewBox="0 0 10 10" preserveAspectRatio="none"><g fill="none" stroke="#aaa" stroke-width="0.8" stroke-linecap="round" stroke-linejoin="round"><path d="M1.5,2.5 L8.5,2.5 M3.5,2.5 L3.5,1 L6.5,1 L6.5,2.5 M2.5,2.5 L3,9 L7,9 L7.5,2.5 M4.3,4 L4.3,7.5 M5.7,4 L5.7,7.5"/></g></svg>
<svg style="left:319px;top:565.5px" width="5" height="5" viewBox="0 0 10 10" preserveAspectRatio="none"><g fill="none" stroke="#aaa" stroke-width="0.8" stroke-linecap="round" stroke-linejoin="round"><circle cx="5" cy="5" r="4"/><path d="M3.5,3 L6.5,7 M6.5,3 L3.5,7"/></g></svg>
<svg style="left:331.4px;top:565.5px" width="5.2" height="5" viewBox="0 0 10 10" preserveAspectRatio="none"><g fill="none" stroke="#aaa" stroke-width="0.8" stroke-linecap="round" stroke-linejoin="round"><rect x="4" y="1.5" width="5" height="7"/><path d="M1,5 L5,5 M3,3.5 L5,5 L3,6.5"/></g></svg>
<svg style="left:343.6px;top:565.5px" width="5.2" height="5" viewBox="0 0 10 10" preserveAspectRatio="none"><g fill="none" stroke="#aaa" stroke-width="0.8" stroke-linecap="round" stroke-linejoin="round"><rect x="1" y="1.5" width="5" height="7"/><path d="M5,5 L9,5 M7,3.5 L9,5 L7,6.5"/></g></svg>
<svg style="left:348.5px;top:574px" width="5" height="5" viewBox="0 0 10 10" preserveAspectRatio="none"><g fill="none" stroke="#ddd" stroke-width="1.3" stroke-linecap="round" stroke-linejoin="round"><path d="M9,1 C9,6 6,9 1,9"/></g></svg>
</body></html>
